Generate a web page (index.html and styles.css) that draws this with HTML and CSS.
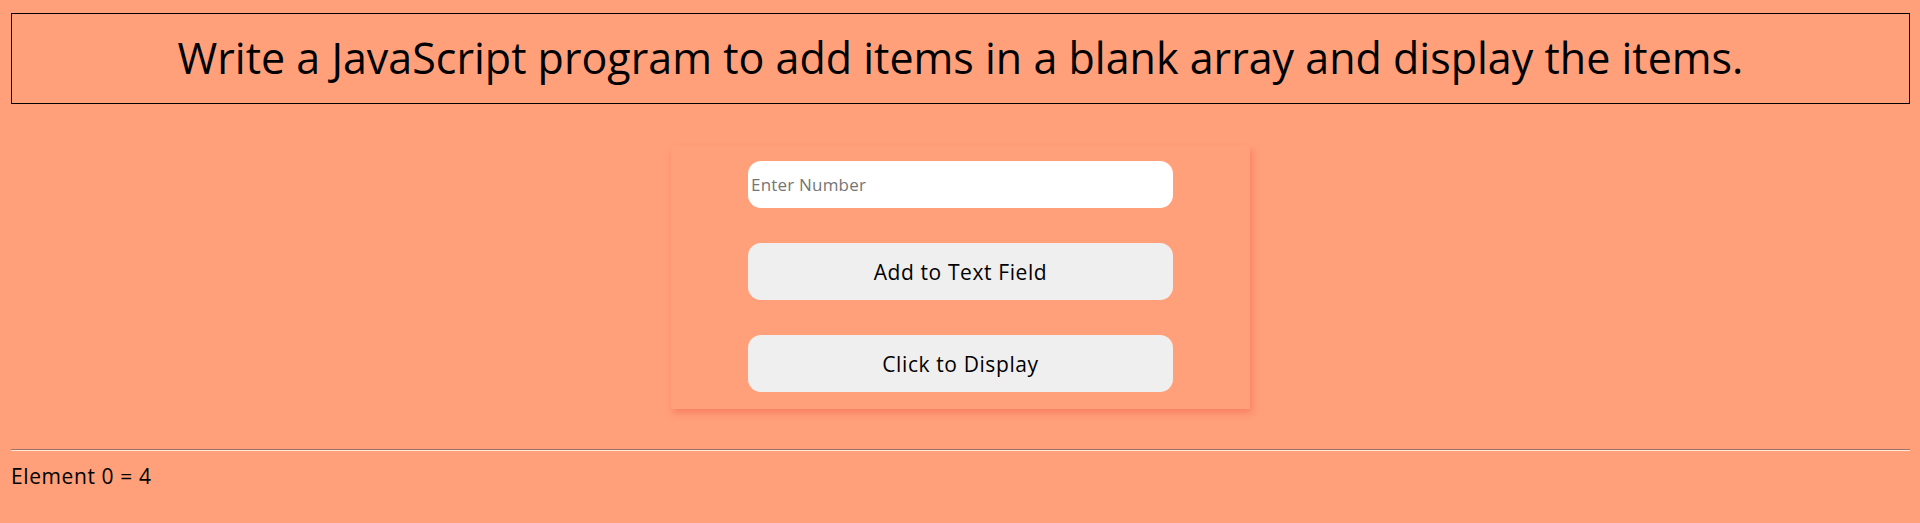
FILE: index.html
```html
<!DOCTYPE html>
<html lang="en">
<head>
<meta charset="utf-8">
<title>Array Items</title>
<link rel="stylesheet" href="styles.css">
</head>
<body>
  <h1 class="title">Write a JavaScript program to add items in a blank array and display the items.</h1>
  <div class="card">
    <input class="field" type="text" placeholder="Enter Number">
    <button class="btn" type="button">Add to Text Field</button>
    <button class="btn" type="button">Click to Display</button>
  </div>
  <hr class="divider">
  <div class="output">Element 0 = 4</div>
</body>
</html>
```

FILE: styles.css
```css
html {
  background: #ffa07a;
}
body {
  margin: 13px 10px 0 11px;
  background: #ffa07a;
  font-family: "Open Sans", "Noto Sans", sans-serif;
  color: #000;
}
.title {
  margin: 0;
  border: 1px solid #000;
  padding: 14px 0 15px;
  font-size: 43px;
  line-height: 60px;
  font-weight: 400;
  text-align: center;
}
.card {
  width: 579px;
  margin: 42px auto 0;
  padding: 15px 0 17px;
  display: flex;
  flex-direction: column;
  align-items: center;
  gap: 35px;
  box-shadow: 2px 4px 7px rgba(238, 90, 70, 0.45);
}
.field {
  box-sizing: border-box;
  width: 425px;
  height: 47px;
  margin: 0;
  border: none;
  border-radius: 13px;
  padding: 0 3px;
  background: #fff;
  font-family: inherit;
  font-size: 17px;
  letter-spacing: 0.2px;
  outline: none;
}
.field::placeholder {
  color: #757575;
}
.btn {
  box-sizing: border-box;
  width: 425px;
  height: 57px;
  margin: 0;
  border: none;
  border-radius: 13px;
  background: #efefef;
  color: #000;
  font-family: inherit;
  font-size: 21px;
  letter-spacing: 0.6px;
}
.divider {
  margin: 40px 0 10px;
  border: none;
  border-top: 1px solid #a07060;
  border-bottom: 1px solid #ffe8dc;
  height: 0;
}
.output {
  font-size: 21px;
  line-height: 30px;
  letter-spacing: 0.6px;
}
```
